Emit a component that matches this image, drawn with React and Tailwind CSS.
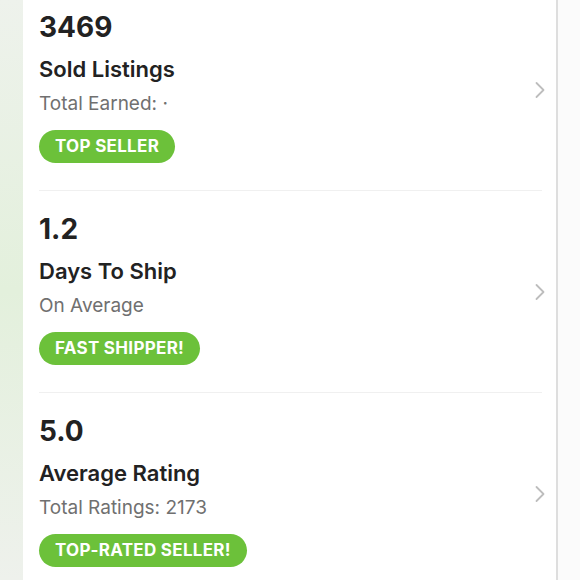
import React from 'react'

const items = [
  { value: '3469', title: 'Sold Listings', sub: 'Total Earned: ·', badge: 'TOP SELLER' },
  { value: '1.2', title: 'Days To Ship', sub: 'On Average', badge: 'FAST SHIPPER!' },
  { value: '5.0', title: 'Average Rating', sub: 'Total Ratings: 2173', badge: 'TOP-RATED SELLER!' },
]

function Chevron() {
  return (
    <svg className="w-[12px] h-[18px] mr-[-4px] mt-[5px] shrink-0 text-[#bdbdbd]" viewBox="0 0 12 18" fill="none" stroke="currentColor">
      <path d="M2.5 2l7 7-7 7" strokeWidth={1.8} strokeLinecap="round" strokeLinejoin="round" />
    </svg>
  )
}

function StatRow({ item, first }) {
  return (
    <div className={`flex items-center border-b border-[#f0f0f0] ${first ? 'pt-[12px]' : 'pt-[23px]'} pb-[27px]`}>
      <div className="flex-1 flex flex-col items-start">
        <div className="text-[28px] leading-[30px] font-bold text-[#222]">{item.value}</div>
        <div className="mt-[13px] text-[22px] leading-[28px] font-semibold text-[#222]">{item.title}</div>
        <div className="mt-[8px] text-[19px] leading-[26px] text-[#707070]">{item.sub}</div>
        <div className="mt-[13px] h-[33px] px-[16px] flex items-center rounded-full bg-[#6cc13a] text-white text-[17px] font-bold tracking-[0.3px]">
          {item.badge}
        </div>
      </div>
      <Chevron />
    </div>
  )
}

export default function App() {
  return (
    <div className="w-[580px] h-[580px] overflow-hidden flex bg-[#fafafa]" style={{ fontFamily: 'Inter, sans-serif' }}>
      <div className="w-[23px] shrink-0 bg-gradient-to-b from-[#eef2ec] via-[#e3f0dc] to-[#eef1ec]" />
      <div className="w-[535px] shrink-0 bg-white border-r-2 border-[#dedede] pl-[16px] pr-[14px]">
        {items.map((item, i) => (
          <StatRow key={item.value} item={item} first={i === 0} />
        ))}
      </div>
      <div className="flex-1 bg-[#fbfbfb]" />
    </div>
  )
}
